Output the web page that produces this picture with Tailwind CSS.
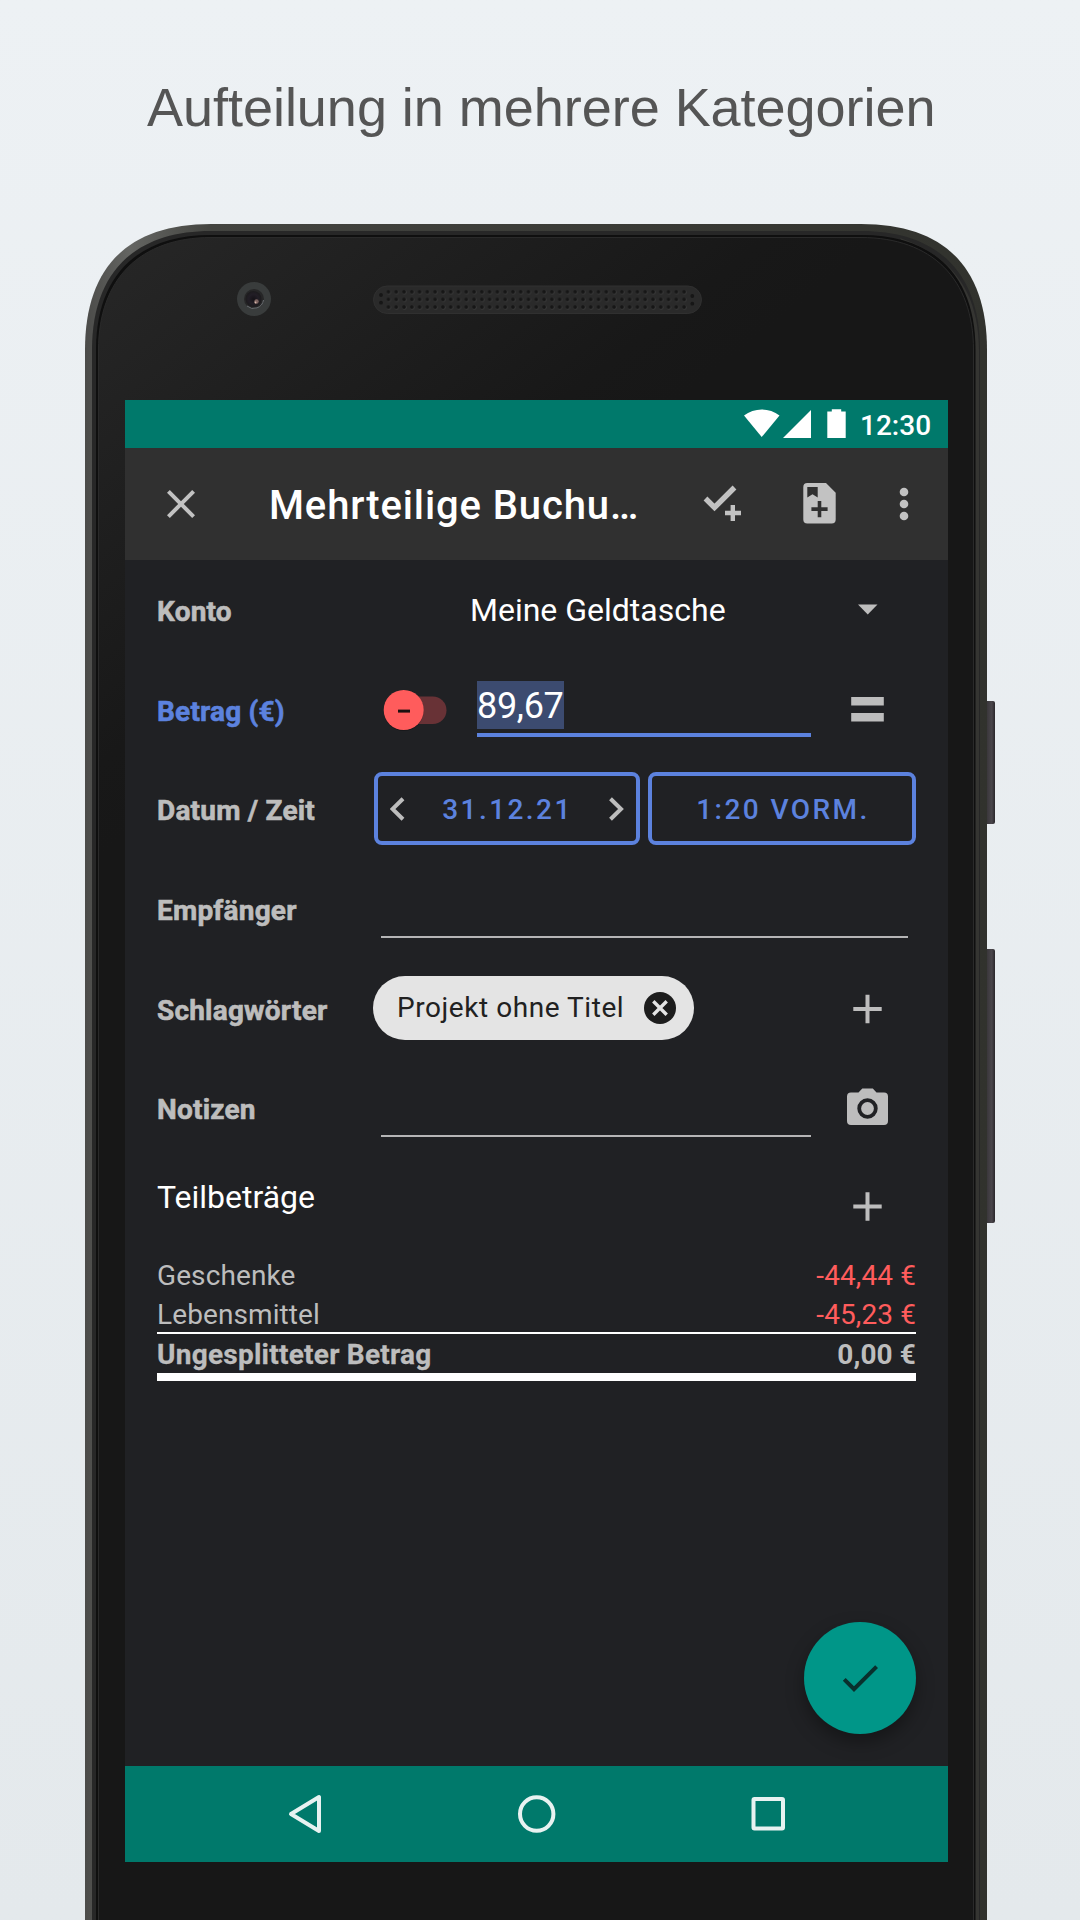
<!DOCTYPE html>
<html lang="de">
<head>
<meta charset="utf-8">
<title>Aufteilung in mehrere Kategorien</title>
<script src="https://cdn.jsdelivr.net/npm/@tailwindcss/browser@4"></script>
</head>
<body class="relative h-[1920px] w-[1080px] overflow-hidden bg-linear-to-b from-[#edf1f4] to-[#e4e9ec] font-['Roboto',sans-serif]">

<!-- Phone body -->
<svg class="absolute inset-0 -z-10 h-[1920px] w-[1080px]" viewBox="0 0 1080 1920" fill="none">
  <defs>
    <linearGradient id="rim" x1="85" y1="0" x2="987" y2="0" gradientUnits="userSpaceOnUse">
      <stop offset="0" stop-color="#4b4b49"/><stop offset=".05" stop-color="#646562"/><stop offset=".14" stop-color="#434440"/><stop offset="1" stop-color="#31322d"/>
    </linearGradient>
    <linearGradient id="face" x1="99" y1="238" x2="400" y2="620" gradientUnits="userSpaceOnUse">
      <stop offset="0" stop-color="#272727"/><stop offset=".45" stop-color="#1f1f1f"/><stop offset=".85" stop-color="#181818"/><stop offset="1" stop-color="#171717"/>
    </linearGradient>
    <linearGradient id="key" x1="987" y1="0" x2="995" y2="0" gradientUnits="userSpaceOnUse">
      <stop offset="0" stop-color="#3a373b"/><stop offset=".6" stop-color="#4a464b"/><stop offset="1" stop-color="#2a272b"/>
    </linearGradient>
    <radialGradient id="lens"><stop offset="0" stop-color="#151217"/><stop offset=".6" stop-color="#221e26"/><stop offset="1" stop-color="#1c1b1d"/></radialGradient>
    <pattern id="holes" x="384.6" y="288" width="7.78" height="7.6" patternUnits="userSpaceOnUse">
      <circle cx="4.4" cy="4.2" r="2.1" fill="#3c3c3c"/><circle cx="3.9" cy="3.7" r="1.9" fill="#161616"/>
    </pattern>
  </defs>
  <rect x="984" y="701" width="11" height="123" rx="2" fill="url(#key)"/>
  <rect x="984" y="949" width="11" height="274" rx="2" fill="url(#key)"/>
  <path fill="url(#rim)" d="M85 1940V350C85 267 128 224 211 224H861C944 224 987 267 987 350V1940Z"/>
  <path fill="#272727" d="M92 1940V350C92 273 134 231 211 231H861C938 231 980 273 980 350V1940Z"/>
  <path fill="#353532" d="M900 238C950 255 979 290 979 350V1940H974V350Z"/>
  <path fill="#0f0f0f" d="M96 1940V350C96 276 137 235 211 235H861C935 235 975.500 276 975.500 350V1940Z"/>
  <path fill="url(#face)" stroke="#2a2a2a" d="M98.500 1940V350C98.500 279 140 237.500 211 237.500H861C932 237.500 973.500 279 973.500 350V1940Z"/>
  <circle cx="254" cy="299" r="17" fill="#393c3c"/>
  <circle cx="254" cy="299" r="10" fill="#262627"/>
  <path d="M247 306a10 10 0 0 0 16.500-6" stroke="#6c7074"/>
  <circle cx="253.500" cy="299" r="8" fill="url(#lens)"/>
  <circle cx="256.500" cy="301.500" r="2.200" fill="#7d6461"/>
  <circle cx="255.500" cy="302.500" r=".9" fill="#d8b9ae"/>
  <rect x="373.500" y="286" width="328" height="27.500" rx="13.750" fill="#2a2a2a" stroke="#303030"/>
  <rect x="384.600" y="288" width="303.400" height="22.800" fill="url(#holes)"/>
  <g fill="#161616"><circle cx="381" cy="295" r="1.900"/><circle cx="381" cy="302.700" r="1.900"/><circle cx="692.300" cy="296" r="1.900"/><circle cx="692.300" cy="303.700" r="1.900"/></g>
</svg>

<h1 class="h-[400px] pt-[76px] pl-[147px] font-['Liberation_Sans',sans-serif] text-[54px] leading-[62px] tracking-[-0.03px] whitespace-nowrap text-[#555555]">Aufteilung in mehrere Kategorien</h1>

<main class="ml-[125px] flex h-[1462px] w-[823px] flex-col bg-[#202124] text-[28px] text-[#bdbdbd]">
  <!-- Status bar -->
  <div class="flex h-12 items-center justify-end bg-[#00796b] pr-[17px] text-white">
    <svg class="h-12 w-[110px]" viewBox="0 0 110 48" fill="currentColor">
      <path d="M4 15.500C14 7.500 29.500 7.500 39.500 15.500L21.700 37Z"/>
      <path d="M43 38L71 10V38Z"/>
      <path d="M87.300 11.500h4.500V9.300h9.400v2.200h4.500V38H87.300Z"/>
    </svg>
    <span class="ml-[10px] w-[71px] pt-[3px] font-medium">12:30</span>
  </div>

  <!-- Toolbar -->
  <header class="flex h-28 shrink-0 items-center bg-[#303030]">
    <svg class="ml-8 h-12 w-12" viewBox="0 0 24 24" fill="#c2c2c2"><path d="M19 6.410L17.590 5 12 10.590 6.410 5 5 6.410 10.590 12 5 17.590 6.410 19 12 13.410 17.590 19 19 17.590 13.410 12z"/></svg>
    <h2 class="ml-16 w-[398px] pt-1 text-[40px] font-medium tracking-[0.022em] whitespace-nowrap text-white">Mehrteilige Buchu…</h2>
    <svg class="ml-6 h-12 w-12 overflow-visible" viewBox="691 480 48 48" fill="none" stroke="#c2c2c2"><path stroke-width="5.400" d="M705.500 498.500L714.500 507.500L734.500 487.500"/><path stroke-width="4.400" d="M725 513H741M732.800 505V521"/></svg>
    <svg class="ml-14 h-12 w-12" viewBox="795 480 48 48"><path fill="#c2c2c2" fill-rule="evenodd" d="M807.300 483H826L835.700 492.800V519.400Q835.700 523.400 831.700 523.400H807.300Q803.300 523.400 803.300 519.400V487Q803.300 483 807.300 483ZM807.300 487V497.500L812.500 494.300L817.700 497.500V487ZM817.700 501V507.200H811.400V511H817.700V517.200H821.300V511H827.600V507.200H821.300V501Z"/></svg>
    <svg class="ml-9 h-12 w-12" viewBox="0 0 24 24" fill="#c2c2c2"><circle cx="12.500" cy="6" r="2.150"/><circle cx="12.500" cy="12" r="2.150"/><circle cx="12.500" cy="18" r="2.150"/></svg>
  </header>

  <section class="relative flex-1 px-8 pt-px">
    <div class="flex h-[100px] items-center">
      <span class="w-[216px] shrink-0 pt-px font-bold tracking-[0.2px] [-webkit-text-stroke:0.6px]">Konto</span>
      <span class="-mt-0.5 ml-[97px] flex-1 text-[32px] text-white">Meine Geldtasche</span>
      <svg class="h-12 w-24" viewBox="0 0 96 48" fill="#bdbdbd"><path d="M38 17.500h19.500L47.750 27.500z"/></svg>
    </div>
    <div class="flex h-[100px] items-center">
      <span class="w-[216px] shrink-0 pt-px font-bold tracking-[0.2px] text-[#5c82de] [-webkit-text-stroke:0.6px]">Betrag (€)</span>
      <svg class="-mt-[3px] h-14 w-[104px]" viewBox="373 683 104 56">
        <rect x="392" y="697.500" width="54.500" height="27.500" rx="13.750" fill="#683236"/>
        <circle cx="403.700" cy="712" r="20" fill="#000" opacity=".25"/>
        <circle cx="403.700" cy="711" r="20" fill="#ff5c5c"/>
        <path fill="#1c1010" d="M398 710.600h12v3h-12z"/>
      </svg>
      <div class="-mt-1 flex h-14 w-[334px] items-start border-b-4 border-[#5c82de] text-[36px] tracking-[-0.3px] text-white"><span class="h-12 bg-[#3c4b70] leading-[51px]">89,67</span></div>
      <svg class="ml-[9px] h-12 w-24" viewBox="0 0 96 48" fill="#bdbdbd"><path d="M31.200 10h32.600v8.500H31.200zM31.200 26h32.600v8.500H31.200z"/></svg>
    </div>
    <div class="flex h-[100px] items-center">
      <span class="w-[216px] shrink-0 font-bold tracking-[0.2px] [-webkit-text-stroke:0.6px]">Datum / Zeit</span>
      <div class="-mt-[5px] ml-px flex gap-2 font-medium tracking-[0.087em] text-[#5c82de]">
        <div class="flex h-[73px] w-[266px] items-center justify-between rounded-lg border-4 border-current pr-3 pl-3">
          <svg class="h-6 w-4" viewBox="0 0 16 24" fill="none" stroke="#bdbdbd" stroke-width="4"><path d="M13 1.700L2.500 12L13 22.300"/></svg>
          <span class="pt-[3px] pl-px">31.12.21</span>
          <svg class="h-6 w-4" viewBox="0 0 16 24" fill="none" stroke="#bdbdbd" stroke-width="4"><path d="M2.500 1.700L13 12L2.500 22.300"/></svg>
        </div>
        <div class="flex h-[73px] w-[268px] items-center justify-center rounded-lg border-4 border-current pt-[3px] pl-0.5">1:20 VORM.</div>
      </div>
    </div>
    <div class="flex h-[100px] items-center">
      <span class="w-[216px] shrink-0 font-bold tracking-[0.2px] [-webkit-text-stroke:0.6px]">Empfänger</span>
      <div class="mx-2 h-[54px] flex-1 border-b-2 border-[#b5b5b6]"></div>
    </div>
    <div class="flex h-[100px] items-center">
      <span class="w-[216px] shrink-0 font-bold tracking-[0.2px] [-webkit-text-stroke:0.6px]">Schlagwörter</span>
      <div class="-mt-1.5 flex h-16 w-[321px] items-center rounded-full bg-[#e4e4e4] pl-6 tracking-[0.02em] text-[#212121]">
        <span>Projekt ohne Titel</span>
        <svg class="mr-[18px] ml-auto h-8 w-8" viewBox="0 0 32 32"><circle cx="16" cy="16" r="16" fill="#1d1d1d"/><path d="M9.300 9.300L22.700 22.700M22.700 9.300L9.300 22.700" stroke="#e4e4e4" stroke-width="3.400"/></svg>
      </div>
      <svg class="-mt-1 ml-[126px] h-12 w-24" viewBox="0 0 96 48" stroke="#bdbdbd" stroke-width="4"><path d="M33.300 24h28.400M47.500 9.800v28.400"/></svg>
    </div>
    <div class="flex h-[100px] items-center">
      <span class="-mt-0.5 w-[216px] shrink-0 font-bold tracking-[0.2px] [-webkit-text-stroke:0.6px]">Notizen</span>
      <div class="mx-2 -mt-0.5 h-[54px] w-[430px] border-b-2 border-[#b5b5b6]"></div>
      <svg class="-mt-2 ml-px h-12 w-24" viewBox="0 0 96 48"><path fill="#bdbdbd" d="M31 9.500h7.500l3.800-4h10.500l3.700 4H64q4 0 4 4V38q0 4-4 4H31q-4 0-4-4V13.500q0-4 4-4Z"/><circle cx="47.500" cy="25.500" r="8.300" fill="none" stroke="#202124" stroke-width="3.800"/></svg>
    </div>
    <div class="flex h-[92px] items-center">
      <span class="-mt-5 flex-1 text-[32px] text-white">Teilbeträge</span>
      <svg class="h-12 w-24" viewBox="0 0 96 48" stroke="#bdbdbd" stroke-width="4"><path d="M33.300 23.500h28.400M47.500 9.300v28.400"/></svg>
    </div>
    <div class="mt-0.5 leading-[39px] tracking-[0.1px]">
      <div class="flex h-[39px] justify-between pt-px"><span>Geschenke</span><span class="text-[#ff5c5c]">-44,44 €</span></div>
      <div class="flex h-[38px] justify-between pt-px"><span>Lebensmittel</span><span class="text-[#ff5c5c]">-45,23 €</span></div>
      <div class="flex h-[49px] justify-between border-t-2 border-b-8 border-white font-bold"><span class="pt-px tracking-[0.25px] [-webkit-text-stroke:0.3px]">Ungesplitteter Betrag</span><span class="pt-px">0,00 €</span></div>
    </div>

    <button class="absolute right-8 bottom-8 flex size-28 items-center justify-center rounded-full bg-[#009688] shadow-[0_8px_18px_rgba(0,0,0,0.35)]">
      <svg class="h-12 w-12" viewBox="0 0 24 24" fill="#09302d"><path d="M9 16.170L4.830 12l-1.420 1.410L9 19 21 7l-1.410-1.410z"/></svg>
    </button>
  </section>

  <!-- Navigation bar -->
  <nav class="flex h-24 items-center bg-[#00796b]">
    <svg class="h-24 w-full" viewBox="125 1766 823 96" fill="none" stroke="#e8f2f1" stroke-width="4" stroke-linejoin="round">
      <path d="M291 1814L319 1797V1831Z"/>
      <circle cx="536.700" cy="1814" r="16.700"/>
      <rect x="753.500" y="1799" width="29.500" height="29.500" rx="1"/>
    </svg>
  </nav>
</main>
</body>
</html>
